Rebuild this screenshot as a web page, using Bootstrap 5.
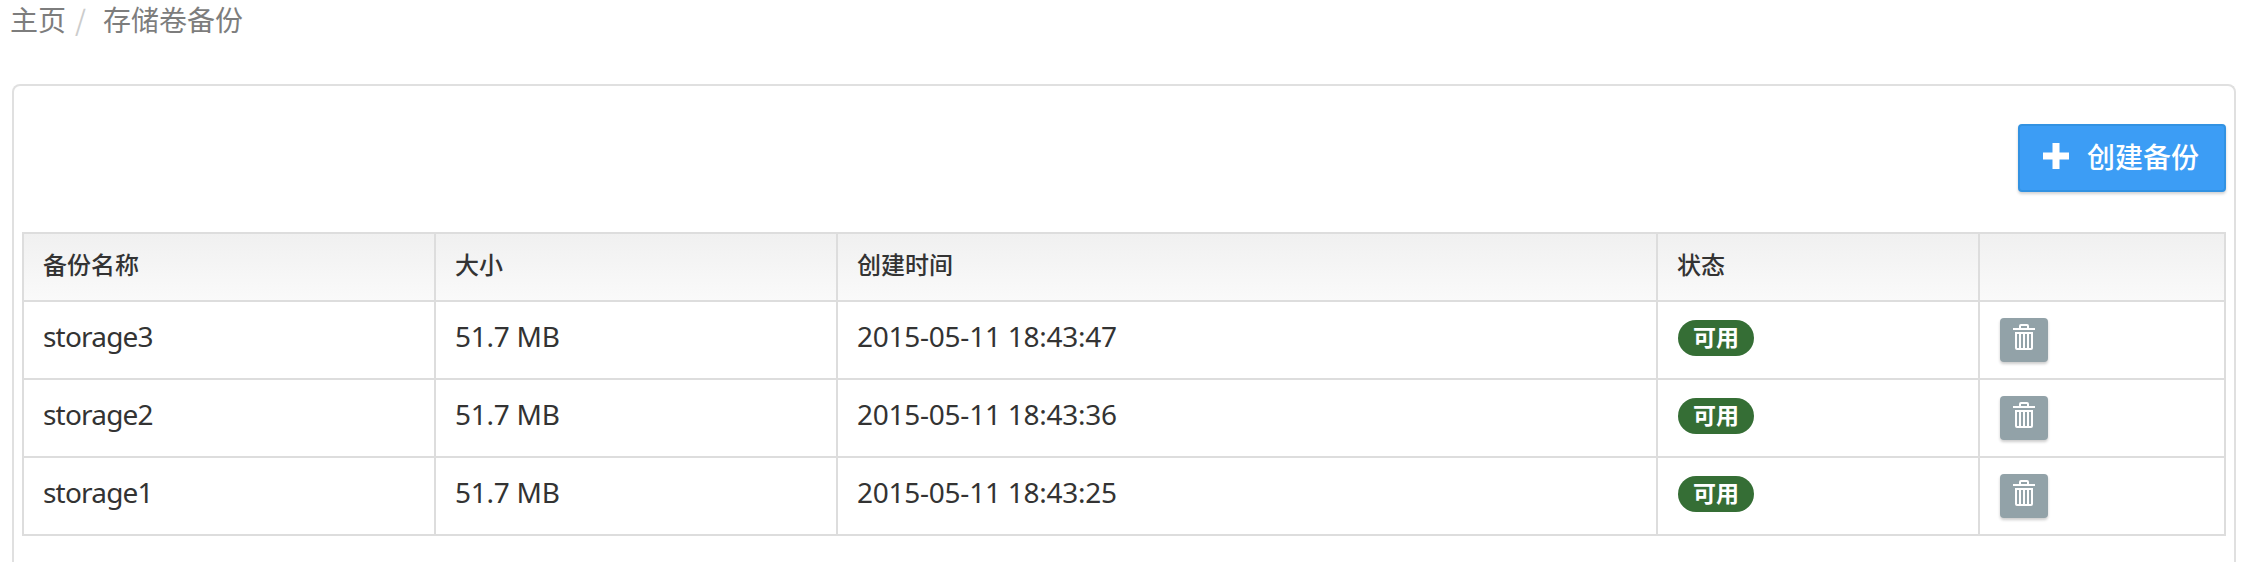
<!DOCTYPE html>
<html lang="zh-CN">
<head>
<meta charset="utf-8">
<title>存储卷备份</title>
<link href="https://cdn.jsdelivr.net/npm/bootstrap@5.3.0/dist/css/bootstrap.min.css" rel="stylesheet">
<style>
  body { font: 28px/40px "Noto Sans", "Noto Sans CJK SC", sans-serif; color: #333; background: #fff; overflow: hidden; }
  .crumbs { height: 84px; padding-left: 10px; font-family: "Noto Sans CJK SC", sans-serif; }
  .crumbs .breadcrumb { font-size: 28px; line-height: 38px; }
  .crumbs .breadcrumb-item { color: #7d7d7d; }
  .crumbs .breadcrumb-item + .breadcrumb-item { padding-left: 9px; }
  .crumbs .breadcrumb-item + .breadcrumb-item::before { padding-right: 17px; color: #ccc; }
  .panel-box { margin: 0 18px 0 12px; border: 2px solid #e0e0e0; border-bottom: 0; border-radius: 8px 8px 0 0; padding: 38px 8px 0; height: 478px; }
  .btn-create { width: 208px; height: 68px; padding: 0 2px 4px 0; border: 2px solid #3292e2; border-radius: 4px; background: #3c9df5; color: #fff; font: 500 28px/40px "Noto Sans CJK SC", sans-serif; box-shadow: 0 2px 3px rgba(0,0,0,.18); gap: 18px; }
  .backups { table-layout: fixed; width: 2204px; margin-top: 40px; --bs-table-color: #333; border-color: #ddd; }
  .backups > :not(caption) > * > * { border: 2px solid #ddd; padding: 0 19px; height: 78px; vertical-align: top; box-shadow: none; color: #333; white-space: nowrap; }
  .backups > :not(caption) > * { border-width: 0; }
  .backups > thead > tr { background: linear-gradient(#f0f0f0, #fafafa); }
  .backups > thead > tr > th { height: 68px; padding-top: 10px; background: transparent; font: 500 24px/40px "Noto Sans CJK SC", sans-serif; }
  .backups > tbody > tr > td { padding-top: 14px; letter-spacing: -.25px; }
  .backups > tbody > tr > .name-cell { letter-spacing: -.8px; }
  .state { display: block; width: 76px; height: 36px; margin: 4px 0 0 1px; padding: 0; border-radius: 18px; background: #356e35; font: 700 23px/32px "Noto Sans CJK SC", sans-serif; letter-spacing: 0; }
  .btn-del { width: 48px; height: 44px; margin: 2px 0 0 1px; padding: 6px 0 0 13px; border: 0; border-radius: 4px; background: #92a2a8; box-shadow: 0 2px 3px rgba(0,0,0,.2); }
  svg { display: block; }
</style>
</head>
<body>
<svg class="d-none"><symbol id="trash" viewBox="0 0 22 26"><path fill="#fff" fill-rule="evenodd" d="M6 4V2Q6 0 8 0H14Q16 0 16 2V4H22V6H0V4ZM8 4H14V2H8ZM2 8H20V24Q20 26 18 26H4Q2 26 2 24ZM4 10V24H6V10ZM8 10V24H10V10ZM12 10V24H14V10ZM16 10V24H18V10Z"/></symbol></svg>
<nav class="crumbs"><ol class="breadcrumb m-0"><li class="breadcrumb-item">主页</li><li class="breadcrumb-item">存储卷备份</li></ol></nav>
<main class="panel-box">
  <div class="d-flex justify-content-end">
    <button class="btn btn-create d-flex align-items-center justify-content-center"><svg width="26" height="26"><path fill="#fff" d="M9.5 0h7v9.5H26v7h-9.5V26h-7v-9.5H0v-7h9.5z"/></svg><span>创建备份</span></button>
  </div>
  <table class="table table-bordered backups mb-0">
    <colgroup><col style="width:412px"><col style="width:402px"><col style="width:820px"><col style="width:322px"><col style="width:246px"></colgroup>
    <thead><tr><th>备份名称</th><th>大小</th><th>创建时间</th><th>状态</th><th></th></tr></thead>
    <tbody>
      <tr><td class="name-cell">storage3</td><td>51.7 MB</td><td>2015-05-11 18:43:47</td><td><span class="badge state">可用</span></td><td><button class="btn btn-del d-flex align-items-start" aria-label="删除"><svg width="22" height="26"><use href="#trash"/></svg></button></td></tr>
      <tr><td class="name-cell">storage2</td><td>51.7 MB</td><td>2015-05-11 18:43:36</td><td><span class="badge state">可用</span></td><td><button class="btn btn-del d-flex align-items-start" aria-label="删除"><svg width="22" height="26"><use href="#trash"/></svg></button></td></tr>
      <tr><td class="name-cell">storage1</td><td>51.7 MB</td><td>2015-05-11 18:43:25</td><td><span class="badge state">可用</span></td><td><button class="btn btn-del d-flex align-items-start" aria-label="删除"><svg width="22" height="26"><use href="#trash"/></svg></button></td></tr>
    </tbody>
  </table>
</main>
<script src="https://cdn.jsdelivr.net/npm/bootstrap@5.3.0/dist/js/bootstrap.bundle.min.js"></script>
</body>
</html>
